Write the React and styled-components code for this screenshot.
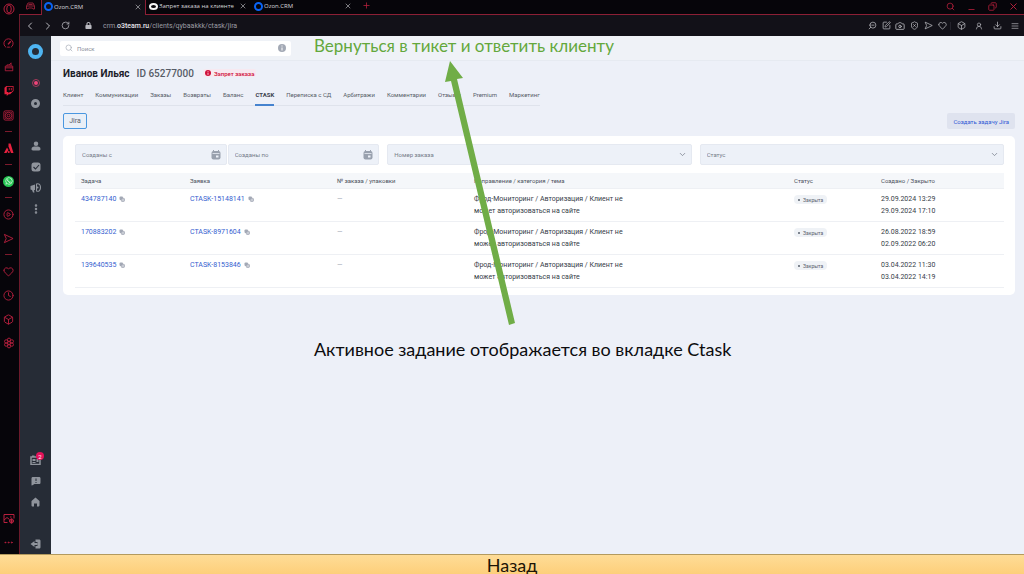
import React from 'react'
import styled, { createGlobalStyle, css } from 'styled-components'
import {
  CirclePlay, Heart, Clock, Box, Ellipsis, EllipsisVertical,
  ChevronLeft, ChevronRight, ChevronDown, RotateCw, Search, Camera, ShieldX, Download,
  X, Plus, Minus, Copy, ZoomOut, SquarePen, UserRound, TextAlignJustify
} from 'lucide-react'
import { FaTwitch, FaWhatsapp, FaLock } from 'react-icons/fa'

const browserTabs = [
  { title: 'Ozon.CRM', active: true },
  { title: 'Запрет заказа на клиенте', white: true },
  { title: 'Ozon.CRM' },
]

const clientTabs = [
  'Клиент', 'Коммуникации', 'Заказы', 'Возвраты', 'Баланс', 'CTASK',
  'Переписка с СД', 'Арбитражи', 'Комментарии', 'Отзывы', 'Premium', 'Маркетинг',
]

const tasks = [
  { id: '434787140', claim: 'CTASK-15148141', created: '29.09.2024 13:29', closed: '29.09.2024 17:10' },
  { id: '170883202', claim: 'CTASK-8971604', created: '26.08.2022 18:59', closed: '02.09.2022 06:20' },
  { id: '139640535', claim: 'CTASK-8153846', created: '03.04.2022 11:30', closed: '03.04.2022 14:19' },
]

const OperaLogo = () => (
  <svg width='12' height='12' viewBox='0 0 24 24' fill='none' stroke='currentColor' strokeWidth='2'>
    <circle cx='12' cy='12' r='10' />
    <ellipse cx='12' cy='12' rx='4.5' ry='8' />
  </svg>
)

const GaugeIcon = () => (
  <svg width='11' height='11' viewBox='0 0 24 24' fill='none' stroke='currentColor' strokeWidth='2'>
    <path d='M7 20.500A10 10 0 1 1 17 20.500' />
    <path d='M11 14l6-7' strokeWidth='3' />
    <path d='M9 20h6' />
  </svg>
)

const WorkspaceIcon = () => (
  <svg width='9' height='8' viewBox='0 0 18 16' fill='none' stroke='currentColor' strokeWidth='2'>
    <path d='M4 2h10l3 6v6h-3l-1-2H5l-1 2H1V8zM2 8h14M5 5h8' />
  </svg>
)

const SendIcon = ({ size }) => (
  <svg width={size} height={size} viewBox='0 0 24 24' fill='none' stroke='currentColor' strokeWidth='2' strokeLinejoin='round'>
    <path d='M3 3l19 9-19 9 4-9z' />
  </svg>
)

const MarketIcon = () => (
  <svg width='10' height='10' viewBox='0 0 24 24' fill='none' stroke='currentColor' strokeWidth='2'>
    <path d='M3 10h18v11H3zM3 14h18M7 10V7h8M13 7l4-5v8' />
  </svg>
)

const PlayerIcon = () => (
  <svg width='11' height='11' viewBox='0 0 24 24' fill='none' stroke='currentColor' strokeWidth='2'>
    <rect x='2' y='2' width='20' height='20' rx='3' />
    <circle cx='12' cy='12' r='7' />
    <circle cx='12' cy='12' r='3' />
    <path d='M5 5l2 2M19 5l-2 2M5 19l2-2M19 19l-2-2' />
  </svg>
)

const AriaIcon = () => (
  <svg width='10' height='11' viewBox='0 0 20 22' fill='currentColor'>
    <path d='M9 1h4l6 19h-5L9 7z' />
    <path d='M6 9l3 5-4 6H0z' />
    <circle cx='9.500' cy='18' r='2' />
  </svg>
)

const FlowerIcon = () => (
  <svg width='12' height='12' viewBox='0 0 24 24' fill='none' stroke='currentColor' strokeWidth='1.8'>
    <circle cx='12' cy='12' r='3' />
    <circle cx='12' cy='5.500' r='3.300' />
    <circle cx='12' cy='18.500' r='3.300' />
    <circle cx='6.300' cy='8.800' r='3.300' />
    <circle cx='17.700' cy='8.800' r='3.300' />
    <circle cx='6.300' cy='15.200' r='3.300' />
    <circle cx='17.700' cy='15.200' r='3.300' />
  </svg>
)

const PictureIcon = () => (
  <svg width='12' height='11' viewBox='0 0 24 22' fill='none' stroke='currentColor' strokeWidth='2'>
    <path d='M9 19H2V3h20v8M2 14l6-5 5 4M14 8h3' />
    <circle cx='17' cy='16' r='4' />
    <path d='M12 16h10M17 11v10' />
  </svg>
)

const PersonIcon = () => (
  <svg width='10' height='10' viewBox='0 0 20 20' fill='currentColor'>
    <circle cx='10' cy='5.500' r='4.500' />
    <path d='M1 16c0-4 3-5 9-5s9 1 9 5c0 3-2 3-9 3s-9 0-9-3z' />
  </svg>
)

const CheckIcon = () => (
  <svg width='10' height='10' viewBox='0 0 20 20'>
    <rect x='1' y='1' width='18' height='18' rx='5' fill='currentColor' />
    <path d='M5 10l4 4 7-8' fill='none' stroke='#262c36' strokeWidth='2.200' />
  </svg>
)

const HornIcon = () => (
  <svg width='11' height='10' viewBox='0 0 22 20' fill='currentColor'>
    <path d='M1 6l9-3v11l-2 .5L9 19H6l-2-5-3-1z' />
    <path d='M13 2c5-2 8 2 8 7s-3 9-8 7z' fill='none' stroke='currentColor' strokeWidth='2.200' />
    <circle cx='15' cy='9' r='2' />
  </svg>
)

const CalendarCardIcon = () => (
  <svg width='11' height='10' viewBox='0 0 22 20'>
    <path d='M2 4h18v15H2z' fill='none' stroke='currentColor' strokeWidth='3' />
    <path d='M5 8h6v4H5zM13 8h4v6h-4zM5 14h6v2H5zM4 1h5v3H4z' fill='currentColor' />
  </svg>
)

const MessageIcon = () => (
  <svg width='10' height='10' viewBox='0 0 20 20'>
    <path d='M4 2h12c2 0 3 1 3 3v8c0 2-1 3-3 3H7l-5 3c-1 0-1-1-1-2V5c0-2 1-3 3-3z' fill='currentColor' />
    <path d='M10 5v5M10 12v2' stroke='#262c36' strokeWidth='2' />
  </svg>
)

const HomeIcon = () => (
  <svg width='9' height='10' viewBox='0 0 18 20'>
    <path d='M9 1l8 7v9c0 1-1 2-2 2h-3v-6H6v6H3c-1 0-2-1-2-2V8z' fill='currentColor' />
  </svg>
)

const ExitIcon = () => (
  <svg width='11' height='10' viewBox='0 0 22 20'>
    <path d='M11 1h7c2 0 3 1 3 3v12c0 2-1 3-3 3h-7v-5h4V6h-4z' fill='currentColor' />
    <path d='M9 4v4h6v4H9v4l-8-6z' fill='currentColor' />
  </svg>
)

const CalendarIcon = () => (
  <svg width='10' height='10' viewBox='0 0 20 20'>
    <path d='M5 0v3M15 0v3' stroke='currentColor' strokeWidth='2' />
    <rect x='1' y='2' width='18' height='17' rx='4' fill='currentColor' />
    <path d='M3 7h14' stroke='#edf1f8' strokeWidth='1.500' />
    <rect x='10' y='11' width='5' height='4' fill='#edf1f8' />
  </svg>
)

const CopyIcon = () => (
  <svg width='6' height='6' viewBox='0 0 12 12'>
    <rect x='1' y='1' width='7' height='7' rx='2' fill='#a3a9b5' />
    <rect x='4.500' y='4.500' width='6.500' height='6.500' rx='2' fill='#c6cad2' stroke='#949baa' strokeWidth='1.300' />
  </svg>
)

const InfoIcon = ({ size }) => (
  <svg width={size} height={size} viewBox='0 0 16 16'>
    <circle cx='8' cy='8' r='8' fill='currentColor' />
    <path d='M8 3v2M8 7v6' stroke='#fff' strokeWidth='2' />
  </svg>
)

const App = () => {
  return (
    <>
      <GlobalStyle />
      <Page>
        <Browser>
          <OperaRail>
            <OperaButton aria-label='Opera'><OperaLogo /></OperaButton>
            <RailItem aria-label='GX Control'><GaugeIcon /></RailItem>
            <RailItem aria-label='Market'><MarketIcon /></RailItem>
            <RailItem aria-label='Twitch' $bright><FaTwitch size={10} /></RailItem>
            <RailItem aria-label='Player'><PlayerIcon /></RailItem>
            <Dash />
            <RailItem aria-label='Aria' $bright><AriaIcon /></RailItem>
            <Dash />
            <RailItem aria-label='WhatsApp'><WhatsApp><FaWhatsapp size={8} /></WhatsApp></RailItem>
            <Dash />
            <RailItem aria-label='Play'><CirclePlay size={11} /></RailItem>
            <RailItem aria-label='Flow'><SendIcon size={11} /></RailItem>
            <Dash />
            <RailItem aria-label='Favourites'><Heart size={11} /></RailItem>
            <RailItem aria-label='History'><Clock size={11} /></RailItem>
            <RailItem aria-label='Extensions'><Box size={11} /></RailItem>
            <RailItem aria-label='Settings'><FlowerIcon /></RailItem>
            <Spacer />
            <RailItem aria-label='Wallpaper'><PictureIcon /></RailItem>
            <RailItem aria-label='More'><Ellipsis size={11} /></RailItem>
          </OperaRail>

          <Window>
            <TabBar>
              <Workspace aria-label='Workspace'><WorkspaceIcon /></Workspace>
              {browserTabs.map((tab, i) => (
                <BrowserTab key={i} $active={tab.active}>
                  <Ring $size={9} $width={2} $color={tab.white ? '#f4f4f4' : '#0a64f5'} $flat={tab.white} />
                  <TabTitle>{tab.title}</TabTitle>
                  <CloseTab aria-label='Закрыть'><X size={8} /></CloseTab>
                </BrowserTab>
              ))}
              <NewTab aria-label='Новая вкладка'><Plus size={9} /></NewTab>
              <TabRest>
                <WindowButton aria-label='Поиск вкладок'><Search size={9} /></WindowButton>
                <WindowButton aria-label='Свернуть' $low><Minus size={9} /></WindowButton>
                <WindowButton aria-label='Развернуть' $mirror><Copy size={9} /></WindowButton>
                <WindowButton aria-label='Закрыть окно'><X size={11} /></WindowButton>
              </TabRest>
            </TabBar>

            <AddressBar>
              <BarButton aria-label='Назад' $w={18}><ChevronLeft size={12} /></BarButton>
              <BarButton aria-label='Вперёд' $w={18}><ChevronRight size={12} /></BarButton>
              <BarButton aria-label='Обновить' $w={16}><RotateCw size={9} /></BarButton>
              <LockBox><FaLock size={7} /></LockBox>
              <Url>crm.<b>o3team.ru</b>/clients/qybaakkk/ctask/jira</Url>
              <Spacer />
              <BarButton aria-label='Масштаб' $w={14} $mirror><ZoomOut size={9} /></BarButton>
              <BarButton aria-label='Изменить' $w={14}><SquarePen size={9} /></BarButton>
              <BarButton aria-label='Снимок' $w={14}><Camera size={10} /></BarButton>
              <BarButton aria-label='Защита' $w={14}><ShieldX size={9} /></BarButton>
              <BarButton aria-label='Отправить' $w={14}><SendIcon size={9} /></BarButton>
              <BarButton aria-label='В избранное' $w={14}><Heart size={9} /></BarButton>
              <Divider />
              <BarButton aria-label='Расширения' $w={18}><Box size={9} /></BarButton>
              <BarButton aria-label='Профиль' $w={18}><UserRound size={8} /></BarButton>
              <BarButton aria-label='Загрузки' $w={18}><Download size={9} /></BarButton>
              <BarButton aria-label='Меню' $w={18}><TextAlignJustify size={8} /></BarButton>
            </AddressBar>

            <Crm>
              <CrmNav>
                <LogoLink href='#' aria-label='Ozon'><Ring $size={15} $width={4} $color='#4fb5f2' /></LogoLink>
                <NavItem aria-label='Запись'><RecordDot /></NavItem>
                <NavItem aria-label='Пауза'><Ring $size={9} $width={3} $color='#8f949c' /></NavItem>
                <NavGap />
                <NavItem aria-label='Клиенты'><PersonIcon /></NavItem>
                <NavItem aria-label='Задачи'><CheckIcon /></NavItem>
                <NavItem aria-label='Новости'><HornIcon /></NavItem>
                <NavItem aria-label='Ещё'><EllipsisVertical size={12} strokeWidth={3} /></NavItem>
                <Spacer />
                <NavItem aria-label='Календарь'><CalendarCardIcon /><Badge>2</Badge></NavItem>
                <NavItem aria-label='Сообщения'><MessageIcon /></NavItem>
                <NavItem aria-label='Домой'><HomeIcon /></NavItem>
                <NavGap />
                <NavItem aria-label='Выход'><ExitIcon /></NavItem>
              </CrmNav>

              <Content>
                <TopBar>
                  <SearchBox>
                    <Search size={8} />
                    <SearchInput type='text' placeholder='Поиск' aria-label='Поиск' />
                    <InfoIcon size={8} />
                  </SearchBox>
                  <TopNote>Вернуться в тикет и ответить клиенту</TopNote>
                </TopBar>

                <Main>
                  <ClientHead>
                    <ClientName>Иванов Ильяс</ClientName>
                    <ClientId>ID 65277000</ClientId>
                    <Ban><InfoIcon size={6} />Запрет заказа</Ban>
                  </ClientHead>

                  <ClientTabs>
                    {clientTabs.map(name => (
                      <ClientTab key={name} href='#' $active={name === 'CTASK'}>{name}</ClientTab>
                    ))}
                  </ClientTabs>

                  <Actions>
                    <JiraButton>Jira</JiraButton>
                    <CreateButton>Создать задачу Jira</CreateButton>
                  </Actions>

                  <Card>
                    <Filters>
                      <DateRange>
                        <DateField>
                          <DateInput type='text' placeholder='Созданы с' aria-label='Созданы с' />
                          <CalendarIcon />
                        </DateField>
                        <DateField>
                          <DateInput type='text' placeholder='Созданы по' aria-label='Созданы по' />
                          <CalendarIcon />
                        </DateField>
                      </DateRange>
                      <SelectField>
                        <Select aria-label='Номер заказа'><option>Номер заказа</option></Select>
                        <ChevronDown size={9} />
                      </SelectField>
                      <SelectField>
                        <Select aria-label='Статус'><option>Статус</option></Select>
                        <ChevronDown size={9} />
                      </SelectField>
                    </Filters>

                    <Table>
                      <colgroup>
                        <Col $w={109} />
                        <Col $w={147} />
                        <Col $w={137} />
                        <Col />
                        <Col $w={87} />
                        <Col $w={129} />
                      </colgroup>
                      <thead>
                        <tr>
                          <Th>Задача</Th>
                          <Th>Заявка</Th>
                          <Th>№ заказа / упаковки</Th>
                          <Th>Направление / категория / тема</Th>
                          <Th>Статус</Th>
                          <Th>Создано / Закрыто</Th>
                        </tr>
                      </thead>
                      <tbody>
                        {tasks.map(task => (
                          <tr key={task.id}>
                            <Td><TaskLink href='#'>{task.id}</TaskLink><CopyIcon /></Td>
                            <Td><TaskLink href='#'>{task.claim}</TaskLink><CopyIcon /></Td>
                            <Td><Muted>—</Muted></Td>
                            <Td><Topic>Фрод-Мониторинг / Авторизация / Клиент не может авторизоваться на сайте</Topic></Td>
                            <Td><Status>Закрыта</Status></Td>
                            <Td>{task.created}<br />{task.closed}</Td>
                          </tr>
                        ))}
                      </tbody>
                    </Table>
                  </Card>

                  <Note>Активное задание отображается во вкладке Ctask</Note>
                </Main>

                <Arrow viewBox='0 0 72 266'>
                  <path d='M6 0L19 17L13 18L71 262L65 264L7 20L1 21Z' fill='#70ad47' />
                </Arrow>
              </Content>
            </Crm>
          </Window>
        </Browser>
        <BackButton>Назад</BackButton>
      </Page>
    </>
  )
}

export default App


const GlobalStyle = createGlobalStyle`
  * {
    box-sizing: border-box;
  }
  body {
    margin: 0;
    background: #edf0f8;
    font-family: Roboto, "Liberation Sans", sans-serif;
    font-size: 7px;
    color: #363d48;
  }
  button, input, select {
    font-family: inherit;
    margin: 0;
    padding: 0;
    border: none;
    background: none;
    color: inherit;
  }
  a {
    text-decoration: none;
  }
  svg {
    flex-shrink: 0;
  }
`
const Page = styled.div`
  min-height: 100vh;
  display: flex;
  flex-direction: column;
`
const Browser = styled.div`
  flex: 1;
  display: flex;
`
const Spacer = styled.div`
  flex: 1;
`
const center = css`
  display: flex;
  align-items: center;
  justify-content: center;
`
const mirror = css`
  svg {
    transform: scaleX(-1);
  }
`

const OperaRail = styled.aside`
  width: 19px;
  padding-right: 2px;
  flex-shrink: 0;
  display: flex;
  flex-direction: column;
  background: #06050a;
`
const RailItem = styled.button`
  ${center}
  height: 24px;
  color: ${p => p.$bright ? '#e8213f' : '#b8203e'};
`
const OperaButton = styled(RailItem)`
  height: 17px;
  margin-bottom: 14px;
`
const Dash = styled.div`
  width: 7px;
  height: 1px;
  margin: 4px auto;
  background: #7d1a2c;
`
const WhatsApp = styled.span`
  ${center}
  width: 11px;
  height: 11px;
  border-radius: 50%;
  background: #25c552;
  color: #fff;
`

const Window = styled.div`
  flex: 1;
  min-width: 0;
  display: flex;
  flex-direction: column;
`
const TabBar = styled.div`
  display: flex;
  height: 15px;
  background: #06050a;
  font-family: "Open Sans", sans-serif;
  color: #d6d6da;
`
const Workspace = styled.button`
  ${center}
  width: 22px;
  padding-bottom: 2px;
  border-bottom: 1px solid #8c1f35;
  color: #8c1f35;
`
const BrowserTab = styled.div`
  display: flex;
  align-items: center;
  gap: 1px;
  width: 105px;
  padding: 0 4px 2px 3px;
  border-bottom: 1px solid #8c1f35;
  ${p => p.$active && css`
    padding: 0 3px 2px 2px;
    background: #121118;
    border: 1px solid #8c1f35;
    border-width: 0 1px;
  `}
`
const TabTitle = styled.span`
  flex: 1;
  font-size: 6px;
  font-weight: 500;
  white-space: nowrap;
`
const CloseTab = styled.button`
  display: flex;
  color: #b5b5ba;
`
const NewTab = styled.button`
  ${center}
  width: 20px;
  padding-bottom: 3px;
  border-bottom: 1px solid #8c1f35;
  color: #b8203e;
`
const TabRest = styled.div`
  flex: 1;
  display: flex;
  justify-content: flex-end;
  border-bottom: 1px solid #8c1f35;
`
const WindowButton = styled.button`
  ${center}
  width: 21px;
  padding-top: ${p => p.$low ? 4 : 0}px;
  padding-bottom: ${p => p.$low ? 0 : 2}px;
  color: #c0223f;
  ${p => p.$mirror && mirror}
`
const Ring = styled.span`
  width: ${p => p.$size}px;
  height: ${p => p.$flat ? p.$size - 2 : p.$size}px;
  flex-shrink: 0;
  border: ${p => p.$width}px solid ${p => p.$color};
  border-radius: 50%;
`

const AddressBar = styled.div`
  display: flex;
  align-items: center;
  height: 21px;
  padding-left: 1px;
  background: #121118;
  border-left: 1px solid #6b1a2b;
  color: #b9b9bf;
`
const BarButton = styled.button`
  ${center}
  width: ${p => p.$w}px;
  ${p => p.$mirror && mirror}
`
const LockBox = styled.span`
  ${center}
  width: 30px;
`
const Url = styled.span`
  font-size: 7px;
  color: #9c9ca3;
  b {
    font-weight: 500;
    color: #e6e6ea;
  }
`
const Divider = styled.span`
  width: 1px;
  height: 8px;
  margin: 0 1px;
  background: #25242d;
`

const Crm = styled.div`
  flex: 1;
  display: flex;
`
const CrmNav = styled.nav`
  display: flex;
  flex-direction: column;
  width: 32px;
  flex-shrink: 0;
  background: #262c36;
  border-left: 1px solid #6b1a2b;
`
const LogoLink = styled.a`
  ${center}
  height: 30px;
  margin-bottom: 6px;
`
const NavItem = styled.button`
  ${center}
  position: relative;
  height: 21px;
  color: #8f949c;
`
const NavGap = styled.div`
  height: 21px;
`
const RecordDot = styled.span`
  width: 8px;
  height: 8px;
  padding: 1px;
  border: 1px solid #a83a5c;
  border-radius: 50%;
  background: #f0447a;
  background-clip: content-box;
`
const Badge = styled.span`
  ${center}
  position: absolute;
  top: 3px;
  left: 16px;
  width: 8px;
  height: 8px;
  border-radius: 50%;
  background: #e3125a;
  color: #fff;
  font-size: 6px;
`

const Content = styled.div`
  position: relative;
  flex: 1;
  min-width: 0;
  background: #edf0f8;
`
const TopBar = styled.header`
  display: flex;
  align-items: center;
  gap: 23px;
  height: 25px;
  padding: 0 9px;
  background: #eff2f7;
  border-bottom: 1px solid #e6eaf1;
`
const SearchBox = styled.div`
  display: flex;
  align-items: center;
  gap: 4px;
  width: 231px;
  height: 15px;
  padding: 0 5px;
  background: #fff;
  border-radius: 2px;
  color: #a3a9b5;
`
const SearchInput = styled.input`
  flex: 1;
  min-width: 0;
  font-size: 6px;
  outline: none;
  &::placeholder {
    color: #8a909c;
  }
`
const Note = styled.p`
  margin: 44px 0 0 251px;
  font-family: Lato, "Open Sans", sans-serif;
  font-size: 18px;
  line-height: 20px;
  white-space: nowrap;
  color: #0c0c0e;
`
const TopNote = styled(Note)`
  align-self: flex-start;
  margin: 0;
  font-size: 17px;
  color: #64a83c;
`

const Main = styled.main`
  padding: 6px 9px 0 12px;
`
const ClientHead = styled.div`
  display: flex;
  align-items: center;
  height: 12px;
`
const ClientName = styled.h1`
  margin: 0 7px 0 0;
  font-size: 10px;
  font-weight: 700;
  color: #1b2029;
`
const ClientId = styled.span`
  margin-right: 9px;
  font-size: 10px;
  font-weight: 500;
  color: #565c67;
`
const Ban = styled.span`
  display: flex;
  align-items: center;
  gap: 3px;
  height: 8px;
  padding: 0 2px;
  background: #f7e9f0;
  border-radius: 2px;
  font-size: 6px;
  font-weight: 500;
  color: #d0103a;
`
const ClientTabs = styled.nav`
  display: flex;
  gap: 12px;
  width: fit-content;
  margin-top: 6px;
  border-bottom: 1px solid #dfe3ec;
`
const ClientTab = styled.a`
  height: 21px;
  margin-bottom: -1px;
  line-height: 19px;
  font-size: 6px;
  font-weight: ${p => p.$active ? 700 : 400};
  color: ${p => p.$active ? '#3c424d' : '#565c67'};
  border-bottom: 2px solid ${p => p.$active ? '#4583cf' : 'transparent'};
`
const Actions = styled.div`
  display: flex;
  justify-content: space-between;
  margin: 7px 0;
`
const JiraButton = styled.button`
  width: 24px;
  height: 16px;
  border: 1px solid #4a97e0;
  border-radius: 2px;
  background: #e9eff7;
  font-size: 7px;
  color: #565c67;
`
const CreateButton = styled.button`
  height: 16px;
  padding: 0 6px;
  border-radius: 2px;
  background: #dfe3ef;
  font-size: 6px;
  color: #2f59d6;
`
const Card = styled.section`
  padding: 8px 11px 7px 12px;
  background: #fff;
  border-radius: 5px;
`
const Filters = styled.div`
  display: grid;
  grid-template-columns: repeat(3, 1fr);
  gap: 8px;
  margin-bottom: 8px;
`
const DateRange = styled.div`
  display: grid;
  grid-template-columns: 1fr 1fr;
  gap: 1px;
`
const field = css`
  display: flex;
  align-items: center;
  height: 21px;
  background: #edf1f8;
  border: 1px solid #e5e9f1;
  border-radius: 2px;
`
const DateField = styled.div`
  ${field}
  padding: 0 5px 0 6px;
  color: #99a1ae;
`
const DateInput = styled.input`
  flex: 1;
  min-width: 0;
  font-size: 6px;
  outline: none;
  &::placeholder {
    color: #757c89;
  }
`
const SelectField = styled.div`
  ${field}
  padding: 0 4px 0 6px;
  color: #757c89;
`
const Select = styled.select`
  flex: 1;
  appearance: none;
  font-size: 6px;
  outline: none;
`
const Table = styled.table`
  width: 100%;
  table-layout: fixed;
  border-collapse: collapse;
`
const Col = styled.col`
  width: ${p => p.$w ? `${p.$w}px` : 'auto'};
`
const Th = styled.th`
  height: 15px;
  padding: 0 6px;
  background: #f5f7fa;
  border-bottom: 1px solid #eef0f4;
  font-size: 6px;
  font-weight: 400;
  text-align: left;
  color: #4c525d;
`
const Td = styled.td`
  height: 33px;
  padding: 4px 6px 0;
  border-bottom: 1px solid #eef0f4;
  vertical-align: top;
  font-size: 7px;
  line-height: 12px;
  svg {
    margin-left: 3px;
    vertical-align: middle;
  }
`
const TaskLink = styled.a`
  color: #3460cf;
`
const Muted = styled.span`
  color: #a3a9b5;
`
const Topic = styled.div`
  max-width: 164px;
`
const Status = styled.span`
  display: inline-flex;
  align-items: center;
  gap: 3px;
  height: 9px;
  padding: 0 4px;
  border-radius: 4px;
  background: #eff2f6;
  font-size: 5px;
  color: #59606c;
  &::before {
    content: '';
    width: 2px;
    height: 2px;
    border-radius: 50%;
    background: #59606c;
  }
`
const Arrow = styled.svg`
  position: absolute;
  top: 25px;
  left: 393px;
  width: 72px;
  height: 266px;
  pointer-events: none;
`
const BackButton = styled.button`
  height: 20px;
  border-top: 1px solid #b39a5e;
  background: linear-gradient(#fedc97, #fdcf7a);
  font-family: Lato, "Open Sans", sans-serif;
  font-size: 18px;
  line-height: 21px;
  color: #1c1406;
`
